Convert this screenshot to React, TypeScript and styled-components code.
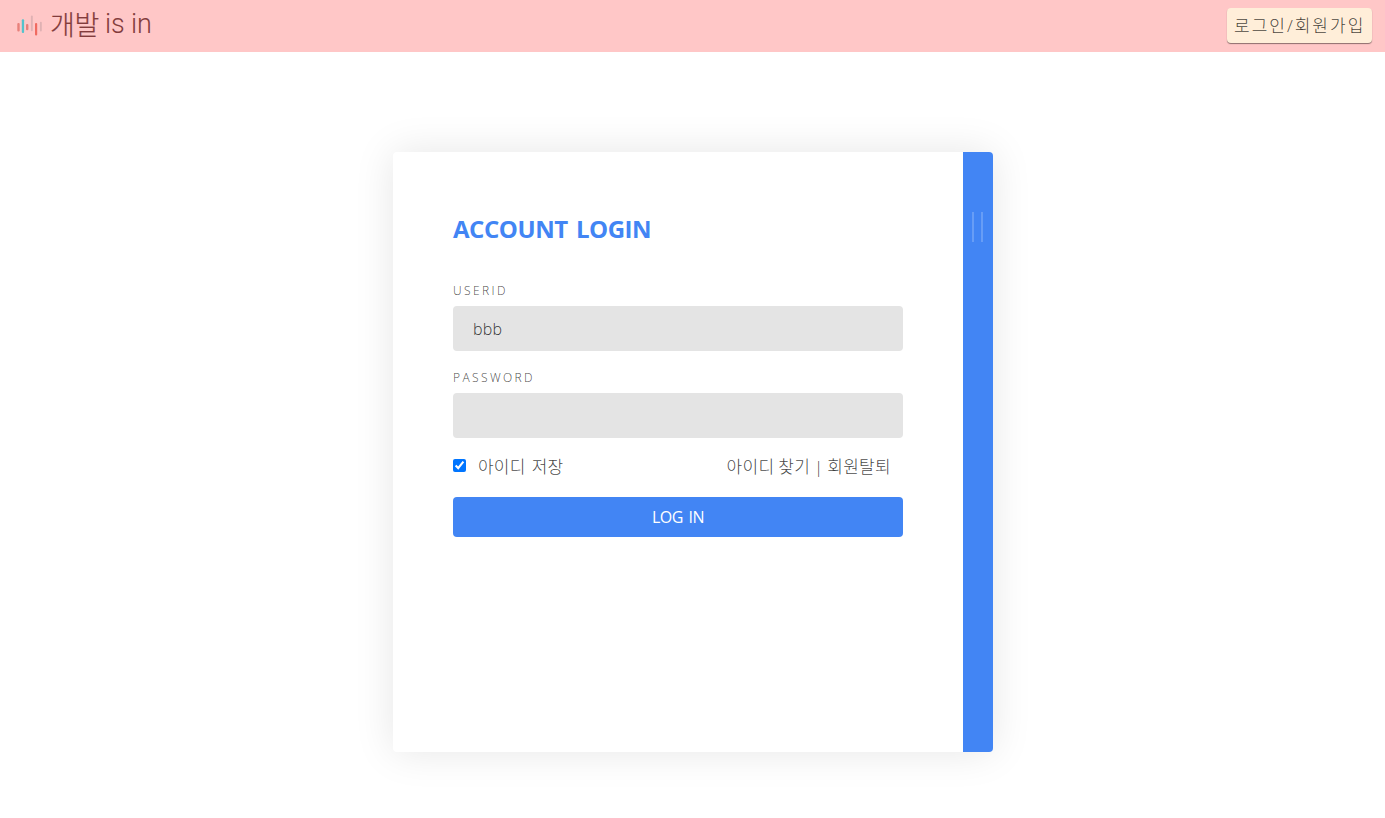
import { useState } from "react";
import styled, { createGlobalStyle } from "styled-components";

const GlobalStyle = createGlobalStyle`
  * {
    box-sizing: border-box;
  }
  body {
    margin: 0;
    min-height: 100vh;
    background: #ffffff;
    color: rgba(0, 0, 0, 0.75);
    font-family: "Open Sans", "Noto Sans CJK KR", sans-serif;
    font-size: 16px;
    font-weight: 300;
  }
  #root {
    display: flow-root;
    min-height: 100vh;
  }
`;

const bars = [
  { x: 17.3, y: 23, w: 2.4, h: 8.5, color: "#e8817b" },
  { x: 21.8, y: 19.3, w: 2.3, h: 13.7, color: "#55c3cc" },
  { x: 26, y: 24, w: 2.4, h: 6.3, color: "#e8817b" },
  { x: 30.9, y: 15.6, w: 1.9, h: 15.6, color: "#dfb1b3" },
  { x: 35, y: 23, w: 2.2, h: 12.4, color: "#f06a60" },
  { x: 39.9, y: 21.8, w: 1.9, h: 9.6, color: "#dfb1b3" },
];

export default function App() {
  const [userId, setUserId] = useState("bbb");
  const [password, setPassword] = useState("");
  const [saveId, setSaveId] = useState(true);

  return (
    <>
      <GlobalStyle />
      <Header>
        <Logo>
          <svg width="50" height="52" viewBox="0 0 50 52">
            {bars.map((bar) => (
              <rect
                key={bar.x}
                x={bar.x}
                y={bar.y}
                width={bar.w}
                height={bar.h}
                rx={1}
                fill={bar.color}
              />
            ))}
          </svg>
          <LogoKorean>개발</LogoKorean>
          <LogoLatin>is in</LogoLatin>
        </Logo>
        <HeaderButton type="button">로그인/회원가입</HeaderButton>
      </Header>

      <Card>
        <Form onSubmit={(event) => event.preventDefault()}>
          <Title>ACCOUNT LOGIN</Title>
          <Field>
            <Label htmlFor="userid">USERID</Label>
            <Input
              id="userid"
              type="text"
              value={userId}
              onChange={(event) => setUserId(event.target.value)}
            />
          </Field>
          <Field>
            <Label htmlFor="password">PASSWORD</Label>
            <Input
              id="password"
              type="password"
              value={password}
              onChange={(event) => setPassword(event.target.value)}
            />
          </Field>
          <Options>
            <SaveLabel>
              <Checkbox
                type="checkbox"
                checked={saveId}
                onChange={(event) => setSaveId(event.target.checked)}
              />
              아이디 저장
            </SaveLabel>
            <Links>아이디 찾기 | 회원탈퇴</Links>
          </Options>
          <Submit type="submit">LOG IN</Submit>
        </Form>
        <Side>
          <Handle />
        </Side>
      </Card>
    </>
  );
}

const Header = styled.header`
  display: flex;
  justify-content: space-between;
  height: 52px;
  padding-right: 13px;
  background: #ffc7c7;
`;

const Logo = styled.div`
  display: flex;
  color: #833c3c;
  line-height: 48px;
  white-space: nowrap;
`;

const LogoKorean = styled.span`
  width: 55px;
  font-family: "Noto Sans CJK KR", sans-serif;
  font-size: 27px;
  font-weight: 300;
  letter-spacing: -0.3px;
  -webkit-text-stroke: 0.2px #833c3c;
`;

const LogoLatin = styled.span`
  font-family: Roboto, sans-serif;
  font-size: 27px;
  font-weight: 300;
  letter-spacing: -0.1px;
`;

const HeaderButton = styled.button`
  width: 145px;
  height: 35px;
  margin-top: 8px;
  padding: 0 0 0 7px;
  border: none;
  border-radius: 4px;
  background: #ffeed9;
  box-shadow: 0 1px 1px rgba(0, 0, 0, 0.45);
  color: rgba(0, 0, 0, 0.75);
  font: 300 17px/36px "Open Sans", "Noto Sans CJK KR", sans-serif;
  letter-spacing: 2px;
  text-align: left;
  white-space: nowrap;
`;

const Card = styled.main`
  display: flex;
  width: 600px;
  height: 600px;
  margin: 100px 0 0 393px;
  border-radius: 4px;
  background: #ffffff;
  box-shadow: 0 0 40px rgba(0, 0, 0, 0.1);
`;

const Form = styled.form`
  width: 570px;
  padding: 60px;
`;

const Title = styled.h1`
  margin: 0 0 50px;
  color: #4285f4;
  font-size: 24px;
  font-weight: 700;
  line-height: 34px;
  height: 24px;
  letter-spacing: -0.45px;
  word-spacing: 2.5px;
  white-space: nowrap;
`;

const Field = styled.div`
  margin-bottom: 22px;
`;

const Label = styled.label`
  display: block;
  height: 12px;
  margin-bottom: 8px;
  font-size: 12px;
  line-height: 10px;
  letter-spacing: 2.4px;
`;

const Input = styled.input`
  display: block;
  width: 100%;
  height: 45px;
  padding: 0 20px;
  border: none;
  border-radius: 4px;
  outline: none;
  background: #e4e4e4;
  color: rgba(0, 0, 0, 0.8);
  font: 300 16px "Open Sans", sans-serif;
  letter-spacing: 0.2px;
`;

const Options = styled.div`
  display: flex;
  justify-content: space-between;
  height: 37px;
  padding-right: 12px;
  font-size: 17px;
  line-height: 13px;
  white-space: nowrap;
`;

const SaveLabel = styled.label`
  display: flex;
  height: 16px;
  letter-spacing: 0.2px;
  word-spacing: 1.5px;
`;

const Checkbox = styled.input`
  width: 13px;
  height: 13px;
  margin: -1px 12px 0 0;
  accent-color: #0075ff;
`;

const Links = styled.span`
  height: 16px;
  letter-spacing: 0.3px;
  word-spacing: -0.9px;
`;

const Submit = styled.button`
  width: 100%;
  height: 40px;
  padding: 0;
  border: none;
  border-radius: 4px;
  background: #4285f4;
  color: #ffffff;
  font: 400 16px "Open Sans", sans-serif;
  letter-spacing: -0.5px;
  word-spacing: 2px;
`;

const Side = styled.div`
  width: 30px;
  padding: 60px 0 0 9px;
  border-radius: 0 4px 4px 0;
  background: #4285f4;
`;

const Handle = styled.div`
  width: 11px;
  height: 30px;
  border: solid rgba(255, 255, 255, 0.2);
  border-width: 0 2px;
`;
